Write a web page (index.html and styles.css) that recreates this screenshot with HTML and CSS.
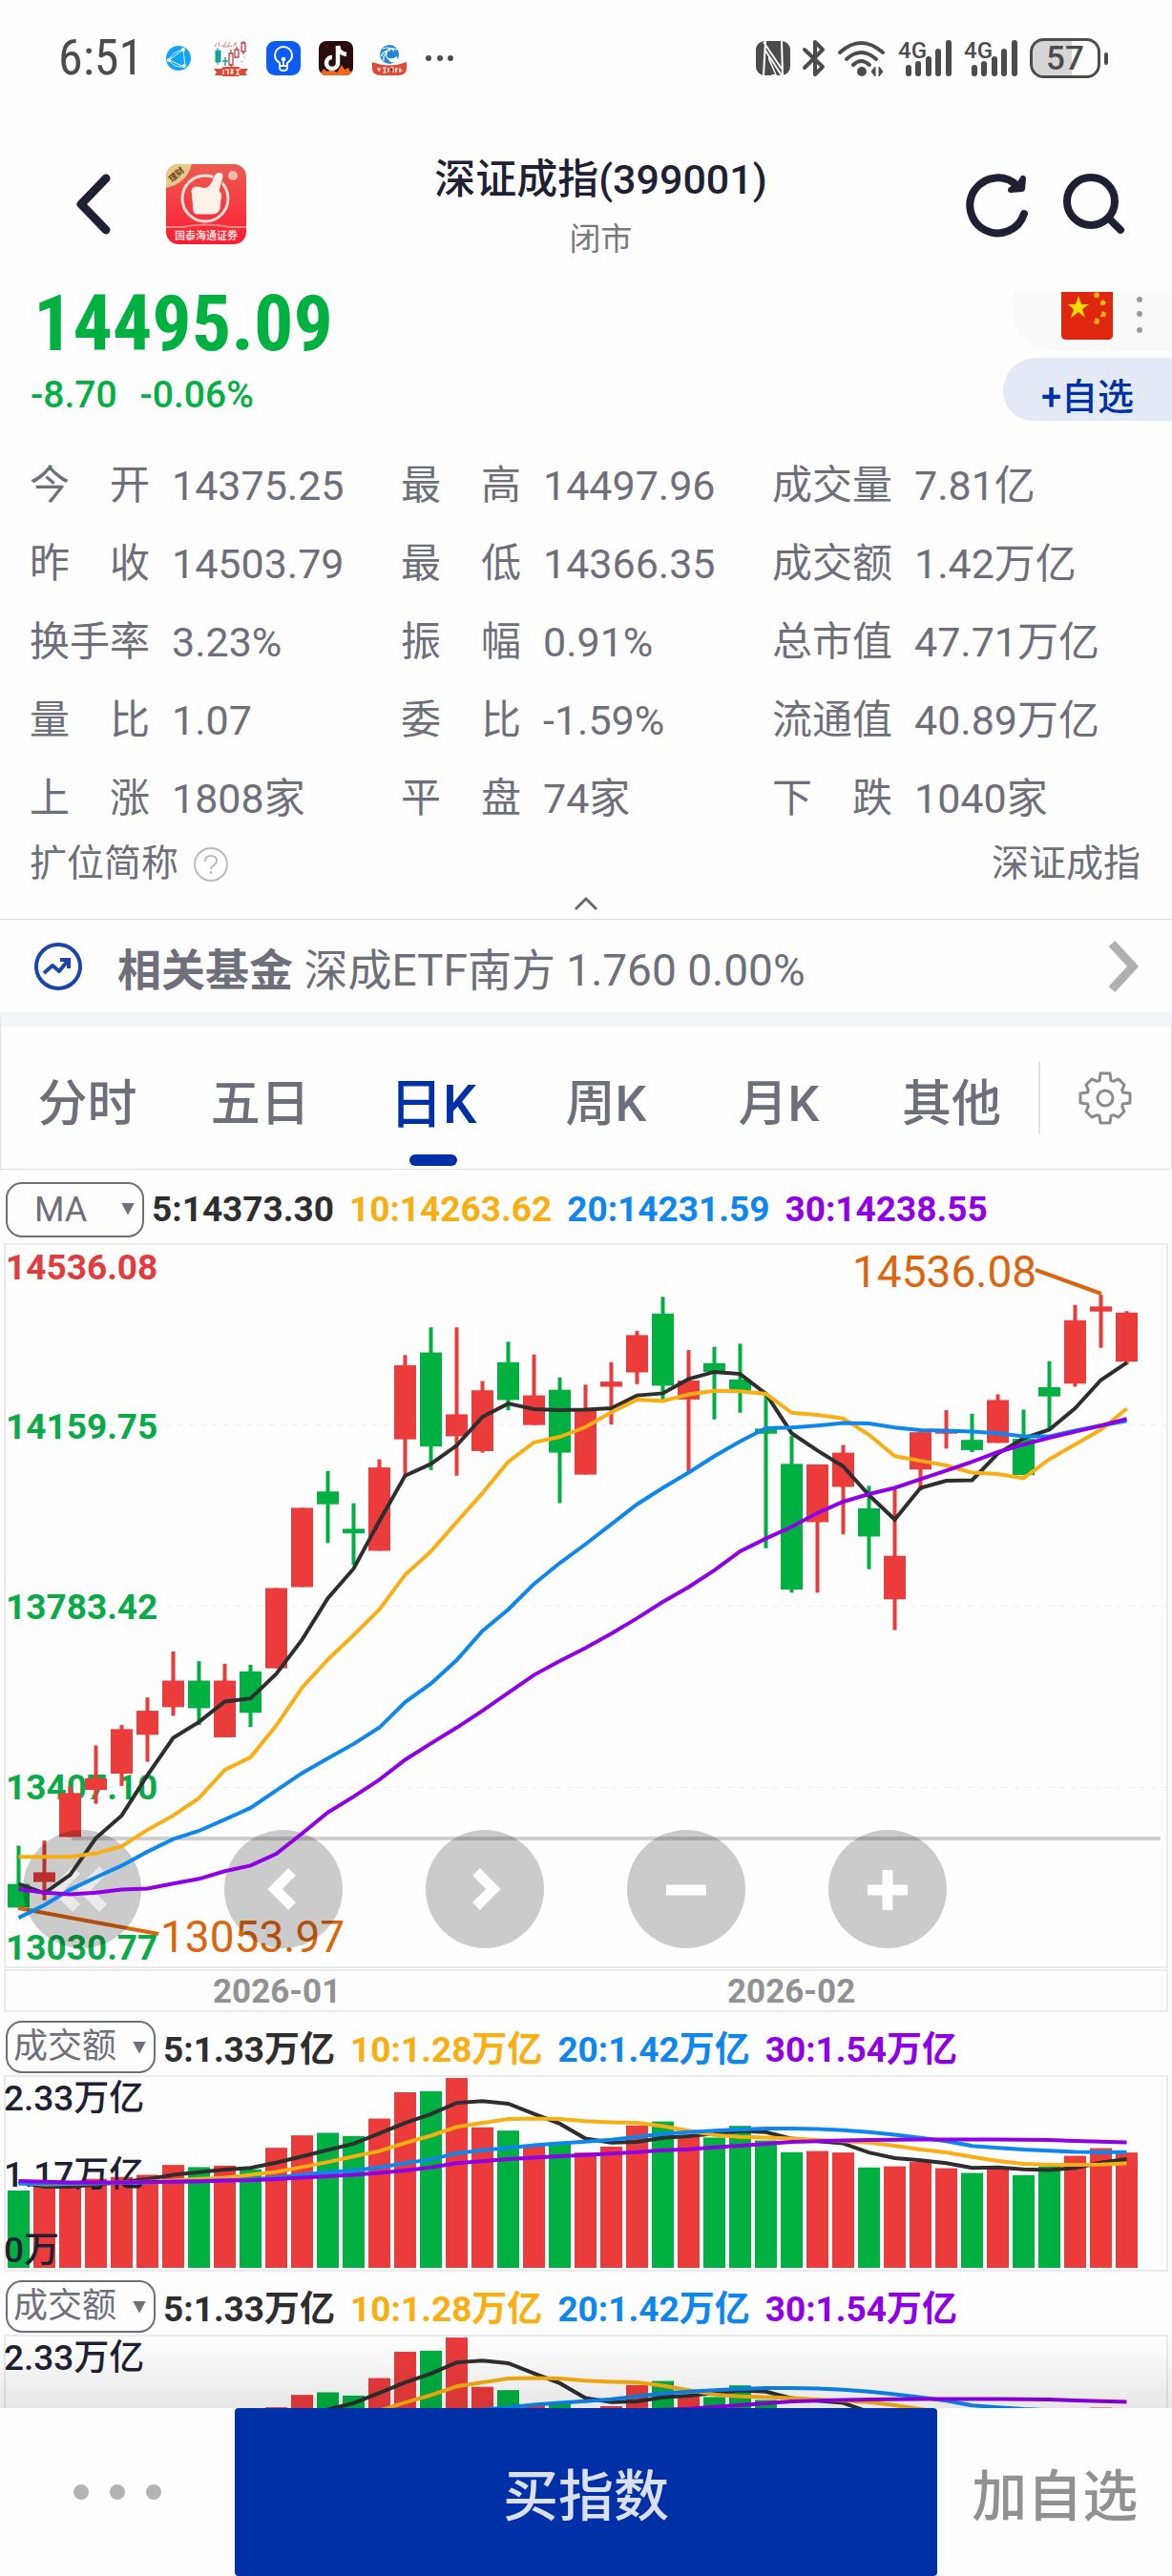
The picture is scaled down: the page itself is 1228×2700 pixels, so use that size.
FILE: index.html
```
<!DOCTYPE html>
<html lang="zh-CN">
	<head>
		<meta charset="UTF-8" />
		<meta name="viewport" content="width=device-width, initial-scale=1.0" />
		<title>深证成指(399001)</title>
		<link rel="stylesheet" href="styles.css">
	</head>
	<body>
		<div class="app">
			<div class="status">
				<div class="status-left">
					<span class="time">6:51</span>
					<svg width="26" height="26" viewBox="0 0 26 26">
						<circle cx="13" cy="13" r="13" fill="#12a5f5" />
						<path d="M3 15 18 4M3 15l16 7M18 4l2 18M18 4q-11 2-15 11M19 22Q8 23 3 15" fill="none" stroke="#dff3ff" stroke-width="1" />
						<circle cx="18" cy="4" r="2" fill="#fff" />
						<circle cx="3" cy="15" r="2" fill="#fff" />
						<circle cx="19" cy="21" r="2" fill="#fff" />
					</svg>
					<svg width="36" height="38" viewBox="0 0 36 38">
						<path d="M3 3 1 7M5 2l1 5M8 6h3M13 2l-3 5h4M17 2l-3 5 5-1M21 3l3 3M24 2l-4 5" stroke="#e88a6a" stroke-width="1" fill="none" />
						<path d="M2 11h5v12H2zM4 8v18" fill="#1a9f96" stroke="#1a9f96" stroke-width="1" />
						<path d="M12 18v9M9 22h6" stroke="#1a9f96" stroke-width="1.5" />
						<path d="M16 14h4v12h-4zM18 10v4M18 26v3M22 10h4v8h-4zM24 7v3M29 3h4v9h-4zM31 1v2M31 12v3" fill="none" stroke="#c93c40" stroke-width="1.3" />
						<path d="M0 30h8l2-2h16l2 2h8l-3 4 2 3h-7l-2 1H10l-2-1H1l2-3z" fill="#dc4a35" />
						<path d="M10 31v5M12 31h3v5M17 31h4M19 31v5M17 34h4M23 31h5M25 31v5M23 36h4" stroke="#fff" stroke-width="1.2" fill="none" />
						<path d="m31 17 2 2m-5 4 3-1" stroke="#e8a29a" />
					</svg>
					<svg width="36" height="36" viewBox="0 0 36 36">
						<rect width="36" height="36" rx="9" fill="#0e5cf8" />
						<path d="M14 26v-3c-3-2-5-4-5-8a9 9 0 0 1 18 0c0 4-2 6-5 8v3z" fill="none" stroke="#fff" stroke-width="2" />
						<path d="M14 26v2q0 3 4 3t4-3v-2M18 19v6" fill="none" stroke="#fff" stroke-width="1.8" />
						<circle cx="18" cy="19" r="2.3" fill="#fff" />
					</svg>
					<svg width="36" height="36" viewBox="0 0 36 36">
						<clipPath id="tile"><rect width="36" height="36" rx="8" /></clipPath>
						<g clip-path="url(#tile)">
							<rect width="36" height="36" fill="#290d0e" />
							<path d="M0 36 5 29l4 3 5-2 5 3 5-8 3 5 4-2 2 4 3-1v5z" fill="#f2671c" />
							<path d="M20 5v18a6 6 0 1 1-6-6" fill="none" stroke="#fff" stroke-width="4.5" />
							<path d="M20 5q1 8 9 9" fill="none" stroke="#fff" stroke-width="4.5" />
						</g>
					</svg>
					<svg width="38" height="36" viewBox="0 0 38 36">
						<circle cx="19" cy="14" r="10" fill="#2187d8" />
						<path d="M27 9q-8-3-11 2-2 5 3 9M12 8q8-3 12 3M10 16q4-7 10-6M13 21q-1-7 4-9" fill="none" stroke="#fff" stroke-width="1.2" />
						<path d="M18 18q5 1 9-2l1 5q-5 3-9 0z" fill="#fff" />
						<path d="M1 22q18 7 36 0v7q0 7-9 7H10q-9 0-9-7z" fill="#e14a35" />
						<path d="M8 28v4M6 29h4M12 28h4M14 28v5M12 33h4M18 28v5M20 28h3v5M25 29h3M26 28v5M30 28v5M29 31h4" stroke="#fff" stroke-width="1.2" />
					</svg>
					<svg width="30" height="8" viewBox="0 0 30 8" fill="#4c4c4c">
						<circle cx="3" cy="4" r="3" /><circle cx="15" cy="4" r="3" /><circle cx="26" cy="4" r="3" />
					</svg>
				</div>
				<div class="status-right">
					<svg width="36" height="38" viewBox="0 0 36 38">
						<rect y="1" width="36" height="36" rx="9" fill="#4c4c4c" />
						<path d="M10 1 8 37M8 2l19 28M10 11l17 26M27 1l1 36" fill="none" stroke="#fff" stroke-width="2" />
						<path d="M13 16v17l4 4h5z" fill="#fff" />
						<path d="M14 4v5l10 14V8l-1-6z" fill="#4c4c4c" />
						<path d="M13 20v16h7z" fill="#4c4c4c" />
					</svg>
					<svg width="24" height="38" viewBox="0 0 24 38">
						<path d="m2 10 19 18-8 8V2l8 8L2 29" fill="none" stroke="#4c4c4c" stroke-width="4" stroke-linecap="round" stroke-linejoin="round" />
					</svg>
					<svg width="50" height="38" viewBox="0 0 50 38">
						<g fill="none" stroke="#4c4c4c" stroke-width="4" stroke-linecap="round">
							<path d="M2 13q22-20 45 0M9 20q15-14 31 0M16 26q8-8 17 0" />
						</g>
						<circle cx="25" cy="33" r="5" fill="#4c4c4c" />
						<path d="m35 33 4-5v10zm12 0-4-5v10z" fill="#4c4c4c" stroke="#4c4c4c" />
					</svg>
					<svg class="signal" width="56" height="40" viewBox="0 0 56 40">
						<text x="0" y="20">4G</text>
						<path d="M11 30v6M21 26v10M32 21v15M42 13v23M53 4v32" />
					</svg>
					<svg class="signal" width="56" height="40" viewBox="0 0 56 40">
						<text x="0" y="20">4G</text>
						<path d="M11 30v6M21 26v10M32 21v15M42 13v23M53 4v32" />
					</svg>
					<svg class="battery" width="82" height="42" viewBox="0 0 82 42">
						<path d="M44 2H15Q2 2 2 15v12q0 13 13 13h29z" fill="#d6d6d6" />
						<rect x="1.500" y="1.500" width="71" height="39" rx="13" fill="none" stroke="#4c4c4c" stroke-width="3" />
						<rect x="78" y="15" width="4" height="13" rx="2" fill="#4c4c4c" />
						<text x="37" y="33" text-anchor="middle">57</text>
					</svg>
				</div>
			</div>

			<header class="header">
				<div class="header-left">
					<button class="icon-btn" aria-label="返回">
						<svg width="36" height="64" viewBox="0 0 36 64">
							<path d="M31 5 5 32l26 27" fill="none" stroke="#1e2134" stroke-width="9" stroke-linecap="round" stroke-linejoin="round" />
						</svg>
					</button>
					<svg width="84" height="84" viewBox="0 0 84 84">
						<defs>
							<linearGradient id="red" x1="0" y1="0" x2="0" y2="1">
								<stop offset="0" stop-color="#ec5c52" />
								<stop offset="1" stop-color="#fd1c33" />
							</linearGradient>
							<clipPath id="logo"><rect width="84" height="84" rx="13" /></clipPath>
						</defs>
						<g clip-path="url(#logo)">
							<rect width="84" height="84" fill="url(#red)" />
							<path d="M0 0h27Q22 20 0 25z" fill="#e9c987" />
							<circle cx="41" cy="36" r="24" fill="none" stroke="#ffe1da" stroke-width="3" />
							<path d="M43 24c5-3 5-9 8-13 4-5 10-2 9 3l-4 14q4 3 2 9l-1 10q-2 6-9 6H34q-6 0-6-5l-2-20q1-5 7-5 6 2 10 1z" fill="#fff1e9" stroke="#e94b44" />
							<circle cx="70" cy="12" r="5" fill="#f8b9ae" />
							<path d="M0 66h17q24-5 50 0h17" fill="none" stroke="#ff8d85" stroke-width="2" />
						</g>
						<text x="11" y="14" font-size="9" font-weight="700" text-anchor="middle" transform="rotate(-42 11 11)" fill="#6c4320">理财</text>
						<text x="42" y="79" font-size="11" font-weight="700" text-anchor="middle" fill="#ffdcd8">国泰海通证券</text>
					</svg>
				</div>
				<div class="title">
					<h1>深证成指(399001)</h1>
					<p>闭市</p>
				</div>
				<div class="header-right">
					<button class="icon-btn" aria-label="刷新">
						<svg width="66" height="68" viewBox="0 0 66 68" fill="none" stroke="#1e2134" stroke-width="8" stroke-linecap="round" stroke-linejoin="round">
							<path d="M60 44A29 29 0 1 1 53 15" />
							<path d="m59 7-1 11-12 1 9-6z" stroke-width="6" fill="#1e2134" />
						</svg>
					</button>
					<button class="icon-btn" aria-label="搜索">
						<svg width="66" height="68" viewBox="0 0 66 68" fill="none" stroke="#1e2134" stroke-width="8" stroke-linecap="round">
							<circle cx="30" cy="31" r="25" />
							<path d="m50 50 11 11" />
						</svg>
					</button>
				</div>
			</header>

			<section class="quote">
				<div>
					<div class="price">14495.09</div>
					<div class="change"><span>-8.70</span><span>-0.06%</span></div>
				</div>
				<div class="quote-side">
					<div class="market">
						<svg width="54" height="50" viewBox="0 0 54 50">
							<path d="M0 0h54v45q0 5-5 5H5q-5 0-5-5z" fill="#df2710" />
							<path d="m18 4 3 9h8l-7 5 3 9-7-6-8 6 3-9-6-5h8z" fill="#ffde00" />
							<path d="m37 0 3 2-1 4-4 0-1-4zM44 8l3 3-2 3h-4v-4zM43 20l4 2-1 4-5 0zM36 27l4 2-1 5-5-1z" fill="#f9b60c" />
						</svg>
						<button class="icon-btn" aria-label="更多">
							<svg width="8" height="40" viewBox="0 0 8 40" fill="#9a9a9a">
								<circle cx="4" cy="4" r="3" /><circle cx="4" cy="19" r="3" /><circle cx="4" cy="36" r="3" />
							</svg>
						</button>
					</div>
					<button class="add-btn">+自选</button>
				</div>
			</section>

			<dl class="stats">
				<div><dt>今 开</dt><dd>14375.25</dd></div>
				<div><dt>最 高</dt><dd>14497.96</dd></div>
				<div><dt>成交量</dt><dd>7.81亿</dd></div>
				<div><dt>昨 收</dt><dd>14503.79</dd></div>
				<div><dt>最 低</dt><dd>14366.35</dd></div>
				<div><dt>成交额</dt><dd>1.42万亿</dd></div>
				<div><dt>换手率</dt><dd>3.23%</dd></div>
				<div><dt>振 幅</dt><dd>0.91%</dd></div>
				<div><dt>总市值</dt><dd>47.71万亿</dd></div>
				<div><dt>量 比</dt><dd>1.07</dd></div>
				<div><dt>委 比</dt><dd>-1.59%</dd></div>
				<div><dt>流通值</dt><dd>40.89万亿</dd></div>
				<div><dt>上 涨</dt><dd>1808家</dd></div>
				<div><dt>平 盘</dt><dd>74家</dd></div>
				<div><dt>下 跌</dt><dd>1040家</dd></div>
			</dl>
			<div class="short-name">
				<span>扩位简称</span>
				<svg width="38" height="38" viewBox="0 0 38 38" fill="none" stroke="#bcbcbe" stroke-width="2">
					<circle cx="19" cy="19" r="17" />
					<path d="M13 16q0-6 6-6t6 5q0 3-3 5t-3 4M19 26v3" />
				</svg>
				<span class="short-value">深证成指</span>
			</div>
			<button class="collapse" aria-label="收起">
				<svg width="26" height="16" viewBox="0 0 26 16">
					<path d="M2 14 13 3l11 11" fill="none" stroke="#6a6a6e" stroke-width="3" />
				</svg>
			</button>

			<a class="fund" href="#">
				<svg width="50" height="50" viewBox="0 0 50 50" fill="none" stroke="#1b46a8" stroke-width="4">
					<circle cx="25" cy="25" r="23" />
					<path d="m10 32 9-8 7 6 9-11" stroke-linejoin="round" />
					<path d="M27 18h9v9" />
				</svg>
				<span class="fund-text"><b>相关基金</b> 深成ETF南方 1.760 0.00%</span>
				<svg width="34" height="52" viewBox="0 0 34 52">
					<path d="m2 2 22 24L2 50" fill="none" stroke="#b0b0b0" stroke-width="9" />
				</svg>
			</a>

			<nav class="tabs">
				<button>分时</button>
				<button>五日</button>
				<button class="active">日K</button>
				<button>周K</button>
				<button>月K</button>
				<button>其他</button>
				<button class="settings" aria-label="设置">
					<svg width="54" height="54" viewBox="0 0 54 54" fill="none" stroke="#8b8b8b" stroke-width="3" stroke-linejoin="round">
						<path d="M21 8.500 22 1H32L33 8.500 35.500 9.300 41 7 47 13 44.700 18.500 45.500 21 53 22V32L45.500 33 44.700 35.500 47 41 41 47 35.500 44.700 33 45.500 32 53H22L21 45.500 18.500 44.700 13 47 7 41 9.300 35.500 8.500 33 1 32V22L8.500 21 9.300 18.500 7 13 13 7 18.500 9.300Z" />
						<circle cx="27" cy="27" r="8" />
					</svg>
				</button>
			</nav>

			<div class="charts">
				<div class="legend legend-ma">
					<span class="picker">
						<select aria-label="主图指标"><option>MA</option></select>
					</span>
					<span class="ma5">5:14373.30</span>
					<span class="ma10">10:14263.62</span>
					<span class="ma20">20:14231.59</span>
					<span class="ma30">30:14238.55</span>
				</div>
				<div class="pane">
					<svg id="kline" viewBox="0 0 1228 806"></svg>
					<div class="tools">
						<button aria-label="最前"><svg viewBox="0 0 124 124"><path d="M56 42 36 62l20 20M84 42 64 62l20 20" opacity="0.6" /></svg></button>
						<button aria-label="向前"><svg viewBox="0 0 124 124"><path d="M71 44 53 62l18 18" /></svg></button>
						<button aria-label="向后"><svg viewBox="0 0 124 124"><path d="m53 44 18 18-18 18" /></svg></button>
						<button aria-label="缩小"><svg viewBox="0 0 124 124"><path d="M41 63h42" /></svg></button>
						<button aria-label="放大"><svg viewBox="0 0 124 124"><path d="M41 63h42M62 42v42" /></svg></button>
					</div>
					<svg id="kline-ma" class="overlay" viewBox="0 0 1228 806"></svg>
				</div>

				<div class="legend">
					<span class="picker picker-wide">
						<select aria-label="副图指标一"><option>成交额</option></select>
					</span>
					<span class="ma5">5:1.33万亿</span>
					<span class="ma10">10:1.28万亿</span>
					<span class="ma20">20:1.42万亿</span>
					<span class="ma30">30:1.54万亿</span>
				</div>
				<svg class="volume" viewBox="0 0 1228 206"></svg>

				<div class="legend">
					<span class="picker picker-wide">
						<select aria-label="副图指标二"><option>成交额</option></select>
					</span>
					<span class="ma5">5:1.33万亿</span>
					<span class="ma10">10:1.28万亿</span>
					<span class="ma20">20:1.42万亿</span>
					<span class="ma30">30:1.54万亿</span>
				</div>
				<svg class="volume" viewBox="0 0 1228 206"></svg>
			</div>

			<footer class="bottom">
				<button class="more" aria-label="更多">
					<svg width="94" height="18" viewBox="0 0 94 18" fill="#b3b3b3">
						<circle cx="9" cy="9" r="8" /><circle cx="47" cy="9" r="8" /><circle cx="85" cy="9" r="8" />
					</svg>
				</button>
				<button class="buy">买指数</button>
				<button class="follow">加自选</button>
			</footer>
		</div>

		<script>
			const STEP = 27;
			const FIRST = 19.5;
			const BAR = 23;

			// r/g, body top, body bottom, high, low
			const candles = [
				["g", 1277, 1323, 1202, 1323], ["r", 1254, 1273, 1192, 1309], ["r", 1099, 1185, 1086, 1185], ["r", 1070, 1093, 1006, 1120],
				["r", 974, 1061, 966, 1085], ["r", 938, 985, 912, 1038], ["r", 879, 931, 822, 948], ["g", 879, 933, 841, 966],
				["r", 879, 990, 846, 990], ["g", 861, 942, 848, 970], ["r", 698, 855, 698, 855], ["r", 541, 696, 541, 696],
				["g", 509, 534, 469, 610], ["g", 582, 591, 532, 653], ["r", 462, 625, 446, 625], ["r", 262, 407, 242, 478],
				["g", 237, 421, 188, 467], ["r", 358, 401, 188, 478], ["r", 311, 430, 293, 433], ["g", 256, 330, 216, 350],
				["r", 321, 379, 241, 379], ["g", 310, 433, 286, 532], ["r", 351, 476, 300, 476], ["r", 294, 304, 256, 378],
				["r", 203, 276, 195, 299], ["g", 161, 302, 128, 330], ["r", 292, 329, 232, 470], ["g", 258, 275, 226, 368],
				["g", 290, 313, 220, 355], ["g", 386, 396, 315, 620], ["g", 455, 701, 400, 707], ["r", 456, 569, 456, 707],
				["r", 433, 500, 418, 593], ["g", 542, 597, 498, 661], ["r", 635, 720, 503, 780], ["r", 393, 466, 389, 507],
				["r", 392, 396, 350, 425], ["g", 408, 428, 357, 432], ["r", 330, 414, 319, 414], ["g", 406, 477, 349, 477],
				["g", 305, 323, 254, 388], ["r", 174, 298, 144, 304], ["r", 147, 157, 124, 228], ["r", 159, 255, 156, 261],
			];
			const priceMa = {
				ma5: [1277, 1295, 1259, 1187, 1143, 1064, 991, 960, 920, 914, 866, 799, 718, 660, 567, 478, 455, 419, 363, 337, 348, 350, 349, 346, 321, 317, 289, 275, 279, 318, 395, 429, 460, 516, 564, 502, 488, 487, 435, 405, 388, 346, 291, 257],
				ma10: [1224, 1224, 1224, 1217, 1203, 1171, 1143, 1109, 1054, 1029, 967, 893, 838, 790, 740, 672, 626, 569, 512, 451, 413, 402, 383, 354, 329, 332, 319, 312, 313, 318, 355, 359, 366, 398, 440, 449, 458, 472, 475, 483, 446, 417, 388, 347],
				ma20: [1343, 1318, 1288, 1264, 1241, 1214, 1189, 1173, 1151, 1128, 1094, 1060, 1031, 1003, 971, 921, 885, 839, 782, 740, 690, 649, 612, 573, 534, 502, 472, 440, 411, 385, 384, 380, 375, 376, 384, 389, 390, 392, 395, 401, 401, 390, 380, 371],
				ma30: [1287, 1294, 1297, 1294, 1288, 1286, 1276, 1267, 1252, 1241, 1218, 1178, 1137, 1106, 1073, 1034, 1002, 971, 938, 903, 868, 841, 815, 787, 757, 725, 696, 663, 626, 601, 578, 551, 529, 514, 502, 485, 468, 451, 432, 417, 404, 392, 380, 367],
			};
			const volumes = [513, 500, 487, 481, 476, 470, 443, 449, 445, 455, 396, 362, 355, 364, 316, 244, 241, 205, 340, 349, 388, 385, 409, 393, 335, 324, 365, 368, 336, 376, 408, 405, 409, 450, 447, 435, 452, 465, 452, 471, 447, 418, 397, 409];
			const volumeMa = {
				ma5: [490, 503, 503, 497, 490, 482, 470, 463, 456, 451, 437, 420, 402, 385, 357, 328, 304, 273, 268, 275, 303, 330, 371, 382, 380, 369, 364, 357, 350, 353, 371, 378, 384, 409, 424, 430, 438, 451, 450, 455, 457, 451, 437, 427],
				ma10: [492, 496, 495, 493, 491, 489, 486, 481, 478, 470, 462, 449, 435, 420, 405, 383, 363, 339, 328, 317, 316, 317, 323, 326, 328, 337, 349, 361, 366, 368, 371, 375, 378, 382, 390, 401, 409, 421, 432, 440, 443, 443, 442, 439],
				ma20: [494, 494, 494, 493, 492, 491, 489, 487, 485, 483, 477, 470, 463, 458, 450, 438, 428, 411, 403, 396, 389, 384, 379, 374, 366, 358, 353, 349, 346, 343, 343, 345, 348, 353, 360, 369, 378, 391, 396, 401, 404, 407, 408, 408],
				ma30: [487, 489, 491, 491, 491, 490, 489, 488, 486, 485, 482, 478, 474, 470, 465, 458, 450, 438, 433, 427, 423, 419, 416, 412, 408, 403, 400, 395, 390, 385, 380, 378, 376, 375, 374, 373, 373, 373, 373, 374, 375, 377, 379, 381],
			};

			const centerX = (i) => FIRST + i * STEP;
			const priceY = (v) => 1 + (v - 25) * 0.5357;
			const volumeY = (v) => (v - 197) * 0.3827;

			function lines(data, y) {
				return Object.keys(data)
					.map((name) => {
						const points = data[name].map((v, i) => `${centerX(i)},${y(v).toFixed(1)}`).join(" ");
						return `<polyline class="line ${name}" points="${points}" />`;
					})
					.join("");
			}

			// K线
			let k = `<rect class="frame" x="5" y="1" width="1218" height="758" />
				<rect class="frame" x="5" y="762" width="1218" height="43" />`;
			[379, 733, 1088].forEach((v) => {
				k += `<path class="grid" d="M6 ${priceY(v)}H1222" />`;
			});
			[["14536.08", 38], ["14159.75", 205], ["13783.42", 394], ["13407.10", 583], ["13030.77", 751]].forEach((t, i) => {
				k += `<text class="scale ${i ? "down" : "up"}" x="6" y="${t[1]}">${t[0]}</text>`;
			});
			k += `<path class="guide" d="M75 ${priceY(1188)}H1216" />`;
			candles.forEach(([c, top, bottom, high, low], i) => {
				const x = centerX(i);
				k += `<path class="${c}" d="M${x - 2} ${priceY(high)}h4V${priceY(low)}h-4z" />
					<rect class="${c}" x="${x - BAR / 2}" y="${priceY(top)}" width="${BAR}" height="${priceY(bottom) - priceY(top)}" />`;
			});
			k += `<path class="callout" d="M1085 28 1154 53M19 697 166 724" />
				<text class="extreme" x="893" y="46">14536.08</text>
				<text class="extreme" x="168" y="743">13053.97</text>
				<text class="date" x="223" y="796">2026-01</text>
				<text class="date" x="762" y="796">2026-02</text>`;
			document.querySelector("#kline").innerHTML = k;
			document.querySelector("#kline-ma").innerHTML = lines(priceMa, priceY);

			// 成交额
			let vol = `<rect class="frame" x="5" y="1" width="1218" height="204" />`;
			volumes.forEach((v, i) => {
				vol += `<rect class="${candles[i][0]}" x="${centerX(i) - BAR / 2}" y="${volumeY(v)}" width="${BAR}" height="${202 - volumeY(v)}" />`;
			});
			vol += `<text class="amount" x="4" y="37">2.33万亿</text>
				<text class="amount" x="4" y="117">1.17万亿</text>
				<text class="amount" x="4" y="196">0万</text>`;
			vol += lines(volumeMa, volumeY);
			document.querySelectorAll(".volume").forEach((el) => {
				el.innerHTML = vol;
			});
		</script>
	</body>
</html>
```
FILE: styles.css
```
* {
	box-sizing: border-box;
}
body {
	margin: 0;
	background: #fefefe;
	color: #6d6f7b;
	font-family: Roboto, "Noto Sans CJK SC", sans-serif;
}
button {
	padding: 0;
	border: 0;
	background: none;
	color: inherit;
	font: inherit;
}
svg {
	display: block;
	flex: none;
	overflow: visible;
}
h1,
p,
dl,
dd {
	margin: 0;
}
.app {
	display: flex;
	flex-direction: column;
	height: 100vh;
	overflow: hidden;
}
.app > * {
	flex: none;
}

/* status bar */
.status {
	display: flex;
	justify-content: space-between;
	padding: 39px 67px 0 61px;
	color: #4c4c4c;
}
.status-left,
.status-right {
	display: flex;
	align-items: center;
	height: 44px;
}
.status-left {
	gap: 19px;
}
.status-left svg:nth-of-type(1) {
	margin-right: 5px;
}
.status-right {
	gap: 13px;
}
.time {
	width: 94px;
	font-family: "Roboto Condensed", Roboto, sans-serif;
	font-size: 52px;
	line-height: 44px;
}
.signal {
	fill: #4c4c4c;
}
.signal path {
	stroke: #4c4c4c;
	stroke-width: 6;
	stroke-linecap: round;
}
.signal text {
	font-size: 24px;
	font-weight: 500;
}
.battery text {
	fill: #4c4c4c;
	font-size: 35px;
	font-weight: 500;
}

/* header */
.header {
	display: grid;
	grid-template-columns: 1fr auto 1fr;
	align-items: center;
	padding: 68px 49px 29px 80px;
	color: #1e2134;
}
.header-left,
.header-right {
	display: flex;
	align-items: center;
}
.header-left {
	gap: 58px;
}
.header-right {
	justify-content: flex-end;
	gap: 34px;
}
.title {
	text-align: center;
}
.title h1 {
	font-size: 43px;
	font-weight: 500;
	line-height: 74px;
}
.title p {
	color: #77797f;
	font-size: 33px;
	line-height: 52px;
}

/* quote */
.quote {
	display: flex;
	justify-content: space-between;
	padding-left: 32px;
	color: #00b041;
}
.price {
	padding-left: 3px;
	font-family: "Roboto Condensed", Roboto, sans-serif;
	font-size: 82px;
	font-weight: 700;
	line-height: 66px;
}
.change {
	display: flex;
	gap: 24px;
	font-size: 39px;
	font-weight: 500;
	line-height: 84px;
}
.quote-side {
	display: flex;
	flex-direction: column;
	align-items: flex-end;
	gap: 8px;
}
.market {
	display: flex;
	align-items: flex-start;
	gap: 24px;
	height: 61px;
	padding: 0 30px 0 51px;
	border-radius: 0 0 0 40px;
	background: #fafafa;
}
.market .icon-btn {
	padding-top: 4px;
}
.add-btn {
	height: 66px;
	padding: 8px 40px 0;
	border-radius: 36px 0 0 32px;
	background: #e3e9f5;
	color: #0030a8;
	font-size: 38px;
	font-weight: 500;
}

/* stats */
.stats {
	display: grid;
	grid-template-columns: repeat(3, 1fr);
	padding: 12px 30px 0 31px;
	font-size: 42px;
	line-height: 82px;
}
.stats div {
	display: flex;
	gap: 23px;
	white-space: nowrap;
}
.stats dt {
	width: 126px;
	text-align: justify;
	text-align-last: justify;
}
.stats dd {
	font-size: 43px;
}
.short-name {
	display: flex;
	align-items: center;
	gap: 15px;
	padding: 0 33px 0 31px;
	font-size: 39px;
	line-height: 55px;
}
.short-value {
	margin-left: auto;
}
.collapse {
	display: flex;
	justify-content: center;
	padding: 6px 0 8px;
	border-bottom: 1px solid #dcdcde;
}

/* related fund */
.fund {
	display: flex;
	align-items: center;
	height: 97px;
	padding: 0 31px 0 36px;
	color: inherit;
	font-size: 46px;
	text-decoration: none;
}
.fund-text {
	flex: 1;
	padding-left: 37px;
}

/* tabs */
.tabs {
	display: grid;
	grid-template-columns: repeat(6, 13fr) 10fr;
	align-items: center;
	height: 165px;
	border: 1px solid #e0e0e3;
	border-top: 15px solid #f4f5f9;
	font-size: 52px;
	font-weight: 500;
}
.tabs button {
	position: relative;
	height: 148px;
	padding-top: 4px;
}
.tabs .active {
	color: #0030a8;
	font-size: 56px;
}
.tabs .active::after {
	content: "";
	position: absolute;
	bottom: 3px;
	left: 50%;
	width: 50px;
	height: 12px;
	margin-left: -25px;
	border-radius: 6px;
	background: #0030a8;
}
.tabs .settings {
	display: flex;
	align-items: center;
	justify-content: center;
	height: 76px;
	padding: 0;
	border-left: 2px solid #e4e4e6;
}

/* charts */
.app > .charts {
	position: relative;
	flex: 1 1 0;
	min-height: 0;
	overflow: hidden;
}
.charts svg {
	width: 100%;
}
.charts::after {
	content: "";
	position: absolute;
	right: 0;
	bottom: 0;
	left: 0;
	height: 74px;
	background: linear-gradient(transparent, rgba(0, 0, 0, 0.09));
}
.legend {
	display: flex;
	align-items: center;
	gap: 16px;
	height: 66px;
	padding: 6px 6px 0;
	font-size: 37px;
	font-weight: 700;
	white-space: nowrap;
}
.legend-ma {
	height: 77px;
}
.picker {
	position: relative;
	margin-right: -8px;
}
.picker select {
	display: block;
	width: 145px;
	height: 58px;
	padding: 0 0 0 28px;
	border: 2px solid #6d6f7b;
	border-radius: 17px;
	appearance: none;
	background: #fefefe;
	color: #6d6f7b;
	font: 36px Roboto, "Noto Sans CJK SC", sans-serif;
}
.picker-wide select {
	width: 157px;
	height: 55px;
	padding-left: 6px;
}
.picker::after {
	content: "";
	position: absolute;
	top: 22px;
	right: 10px;
	width: 14px;
	height: 13px;
	background: #6d6f7b;
	clip-path: polygon(0 0, 100% 0, 50% 100%);
}
.ma5 {
	color: #2e2e2e;
	stroke: #2e2e2e;
}
.ma10 {
	color: #f9ae12;
	stroke: #f9ae12;
}
.ma20 {
	color: #0d86ee;
	stroke: #0d86ee;
}
.ma30 {
	color: #8f00e6;
	stroke: #8f00e6;
}
.pane {
	position: relative;
}
.overlay {
	position: absolute;
	top: 0;
	left: 0;
	pointer-events: none;
}
.tools {
	position: absolute;
	top: 615px;
	left: 24px;
	display: flex;
	gap: 87px;
}
.tools button {
	width: 124px;
	height: 124px;
	border-radius: 50%;
	background: rgba(0, 0, 0, 0.2);
}
.tools path {
	fill: none;
	stroke: #fff;
	stroke-width: 11;
}
.frame {
	fill: none;
	stroke: #ebebeb;
	stroke-width: 2;
}
.grid {
	stroke: #ededed;
	stroke-dasharray: 6 6;
}
.guide {
	stroke: #cfcfcf;
	stroke-width: 4;
}
.r {
	fill: #eb3b3b;
}
.g {
	fill: #00b041;
}
.line {
	fill: none;
	stroke-width: 4;
}
.scale {
	font-size: 37px;
	font-weight: 700;
}
.up {
	fill: #e23c3e;
}
.down {
	fill: #08ab48;
}
.callout {
	stroke: #dc640e;
	stroke-width: 4;
}
.extreme {
	fill: #dc640e;
	font-size: 46px;
}
.date {
	fill: #929292;
	font-size: 35px;
	font-weight: 700;
}
.amount {
	fill: #1e2134;
	font-size: 37px;
	font-weight: 500;
}

/* bottom bar */
.bottom {
	position: relative;
	display: grid;
	grid-template-columns: 1fr 3fr 1fr;
	height: 176px;
	background: #fefefe;
	font-size: 58px;
	font-weight: 500;
}
.more {
	display: flex;
	align-items: center;
	justify-content: center;
}
.buy {
	border-radius: 4px;
	background: #0030a8;
	color: #dbe0f0;
}
.follow {
	color: #919191;
}
```
